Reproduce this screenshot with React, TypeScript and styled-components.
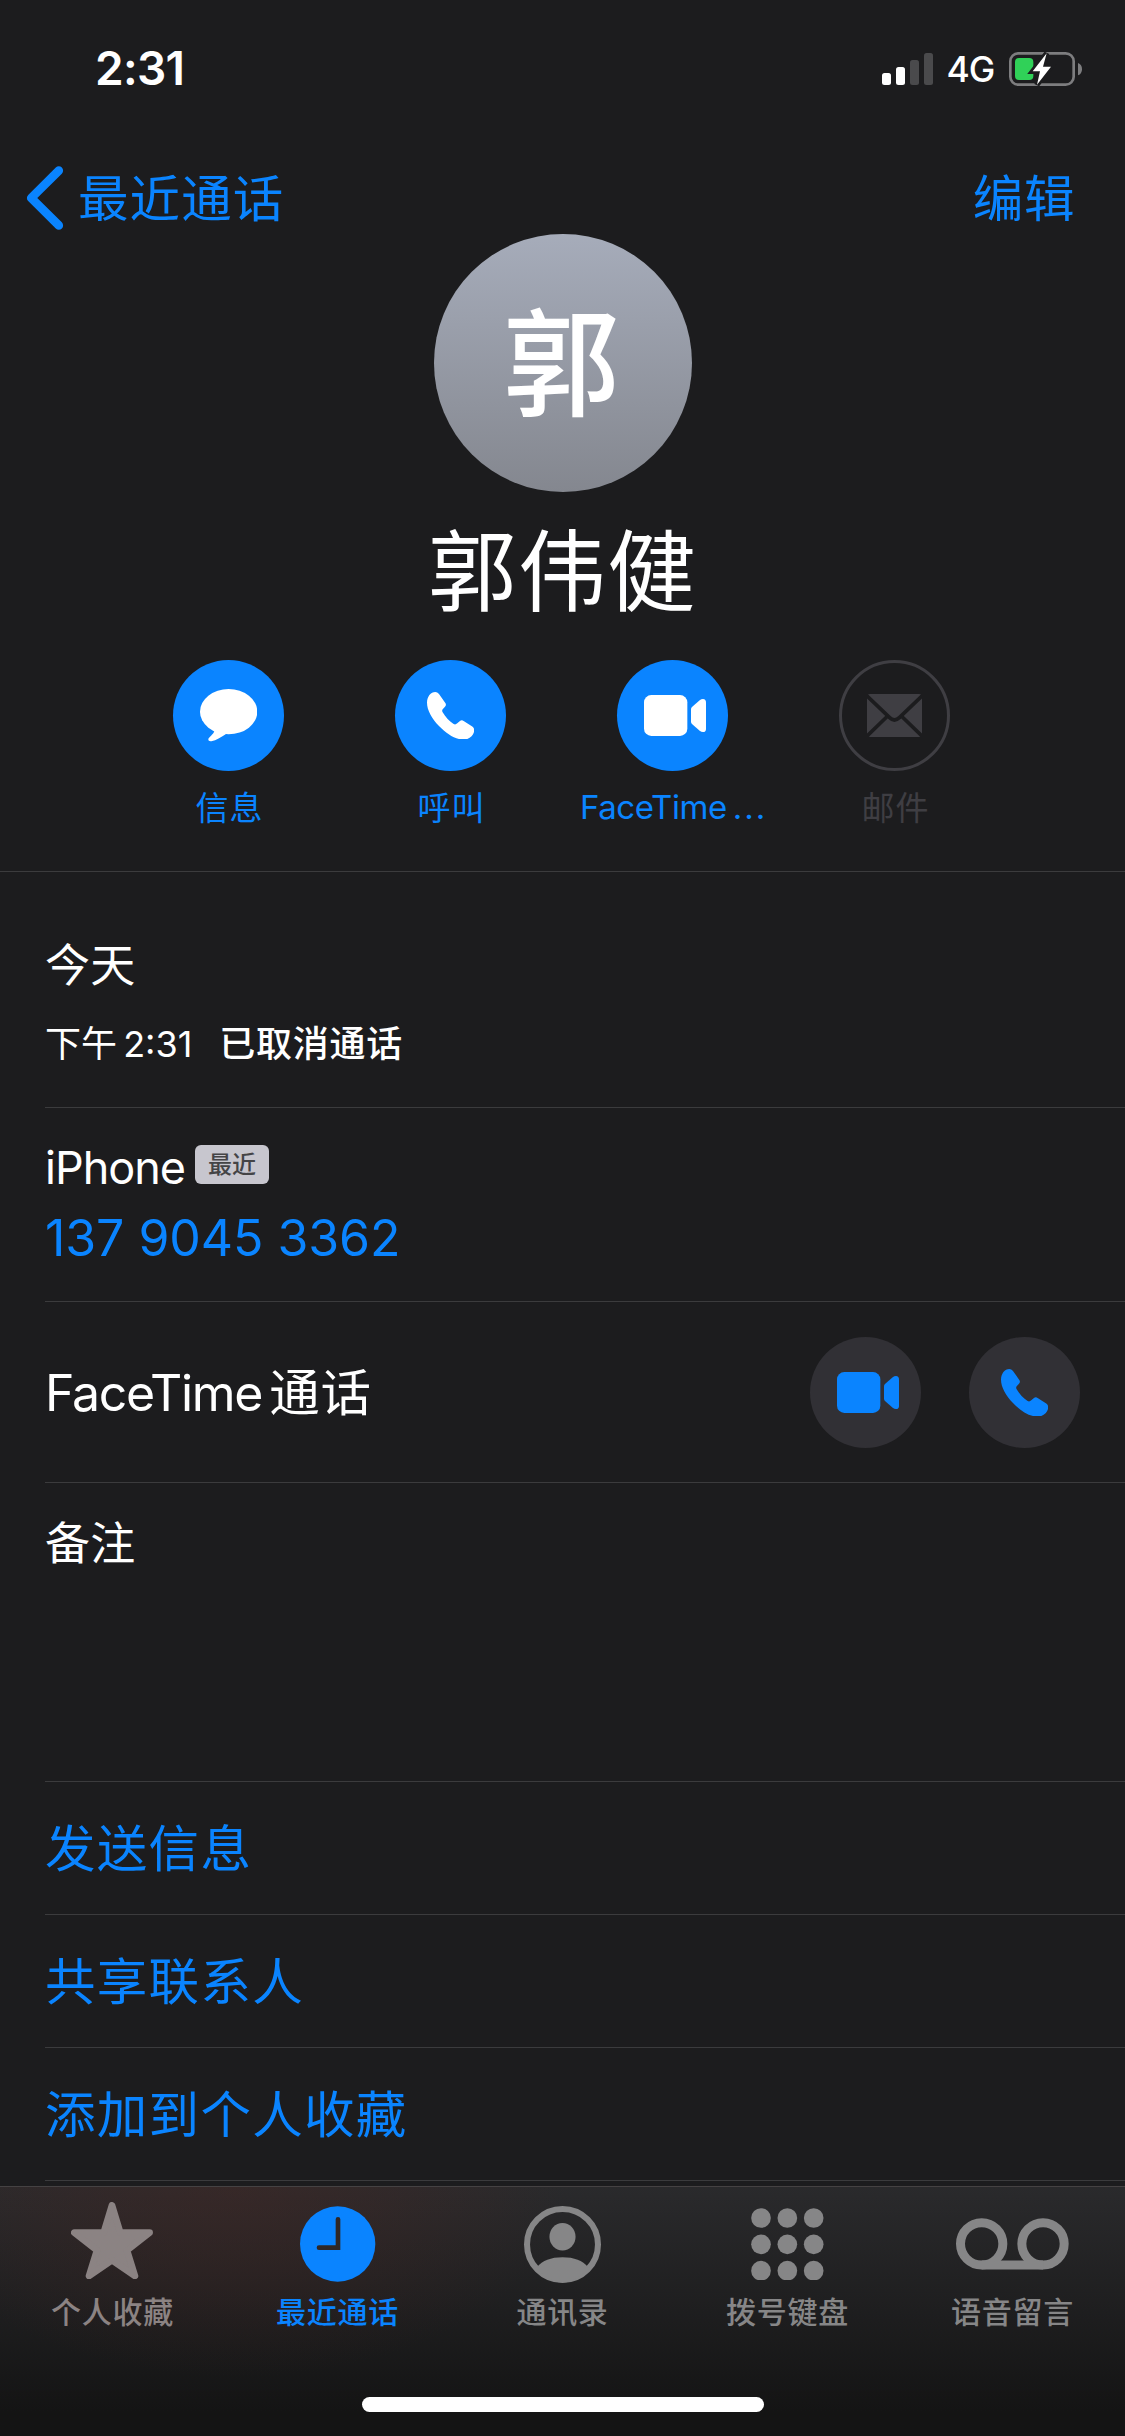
import React from 'react';
import styled, { createGlobalStyle, css } from 'styled-components';

const BLUE = '#0a84ff';
const BG = '#1c1c1e';
const LINE = '#3b3b3d';
const DISABLED = '#3f3e43';

const GlobalStyle = createGlobalStyle`
  * { box-sizing: border-box; }
  body {
    margin: 0;
    background: ${BG};
    color: #fff;
    font-family: Inter, "Noto Sans CJK SC", sans-serif;
  }
`;

const Screen = styled.div`
  width: 1125px;
  height: 2436px;
  display: flex;
  flex-direction: column;
  overflow: hidden;
  background: ${BG};
`;

const Text = styled.span<{ $size: number; $track?: number; $weight?: number; $color?: string }>`
  font-size: ${p => p.$size}px;
  line-height: 1.2;
  letter-spacing: ${p => p.$track ?? 0}px;
  font-weight: ${p => p.$weight ?? 400};
  color: ${p => p.$color ?? 'inherit'};
  white-space: nowrap;
`;

const StatusBar = styled.header`
  height: 132px;
  flex: none;
  display: flex;
  justify-content: space-between;
  align-items: flex-start;
  padding: 41px 43px 0 95px;
`;

const StatusIcons = styled.div`
  display: flex;
  align-items: center;
  height: 56px;
`;

const NetworkLabel = styled(Text)`
  margin: 2px 15px 0 14px;
`;

const NavBar = styled.nav`
  height: 132px;
  flex: none;
  display: flex;
  justify-content: space-between;
  align-items: center;
  padding: 0 50px 0 26px;
  color: ${BLUE};
`;

const NavText = styled(Text)`
  padding-top: 2px;
`;

const BackButton = styled.div`
  display: flex;
  align-items: center;
  gap: 14px;
`;

const Profile = styled.section`
  height: 608px;
  flex: none;
  display: flex;
  flex-direction: column;
  align-items: center;
  border-bottom: 1px solid ${LINE};
`;

const Avatar = styled.div`
  width: 258px;
  height: 258px;
  margin-top: -30px;
  padding-top: 5px;
  padding-right: 2px;
  flex: none;
  border-radius: 50%;
  display: flex;
  align-items: center;
  justify-content: center;
  background: linear-gradient(#a6acba, #84878f);
`;

const Name = styled(Text)`
  margin-top: 27px;
  height: 104px;
`;

const Actions = styled.div`
  display: grid;
  grid-template-columns: repeat(4, 222px);
  margin-top: 37px;
  margin-right: 2px;
`;

const Action = styled.div<{ $disabled?: boolean }>`
  display: flex;
  flex-direction: column;
  align-items: center;
  gap: 17px;
  color: ${p => (p.$disabled ? DISABLED : BLUE)};
`;

const ActionLabel = styled(Text)<{ $latin?: boolean }>`
  padding-top: ${p => (p.$latin ? 0 : 1)}px;
  padding-left: 2px;
`;

const Circle = styled.div<{ $variant: 'solid' | 'outline' | 'muted' }>`
  width: 111px;
  height: 111px;
  border-radius: 50%;
  display: flex;
  align-items: center;
  justify-content: center;
  ${p => p.$variant === 'solid' && css`background: ${BLUE}; color: #fff;`}
  ${p => p.$variant === 'outline' && css`border: 3px solid ${DISABLED}; color: ${DISABLED};`}
  ${p => p.$variant === 'muted' && css`background: #313035; color: ${BLUE};`}
`;

const Dots = styled.span`
  letter-spacing: 1.9px;
  margin-left: 6px;
`;

const Row = styled.section<{ $height: number; $justify?: string }>`
  height: ${p => p.$height}px;
  flex: none;
  margin-left: 45px;
  display: flex;
  flex-direction: column;
  justify-content: ${p => p.$justify ?? 'flex-start'};
  border-bottom: 1px solid ${LINE};
`;

const LinkText = styled(Text)`
  padding-top: 3px;
`;

const Day = styled(Text)`
  margin-top: 67px;
`;

const CallLine = styled.div`
  display: flex;
  align-items: center;
  margin-top: 30px;
  gap: 27px;
`;

const CallTime = styled(Text)`
  word-spacing: -4px;
`;

const PhoneLabel = styled.div`
  display: flex;
  align-items: center;
  gap: 10px;
  height: 54px;
  margin-top: 33px;
`;

const Badge = styled.span`
  height: 39px;
  width: 74px;
  margin-bottom: 7px;
  padding-top: 1px;
  border-radius: 6px;
  background: #c7c6ce;
  color: #444446;
  display: flex;
  align-items: center;
  justify-content: center;
`;

const PhoneNumber = styled(Text)`
  margin-top: 13px;
`;

const FaceTimeRow = styled(Row)`
  flex-direction: row;
  align-items: center;
  justify-content: space-between;
  padding-right: 45px;
`;

const FaceTimeTitle = styled.div`
  display: flex;
  align-items: center;
  gap: 7px;
  padding-top: 2px;
`;

const RoundButtons = styled.div`
  display: flex;
  gap: 48px;
  margin-top: 1px;
`;

const Notes = styled(Text)`
  margin-top: 34px;
`;

const TabBar = styled.footer`
  height: 250px;
  flex: none;
  margin-top: 5px;
  border-top: 1px solid #454243;
  display: flex;
  flex-direction: column;
  align-items: center;
  background:
    radial-gradient(ellipse 330px 190px at 235px 0px, rgba(74, 38, 34, 0.4), rgba(74, 38, 34, 0.25) 45%, rgba(74, 38, 34, 0)),
    linear-gradient(#2a2a2c, #1e1e1f 50%, #141414 90%);
`;

const Tabs = styled.div`
  width: 100%;
  height: 210px;
  display: grid;
  grid-template-columns: repeat(5, 1fr);
`;

const Tab = styled.div<{ $active?: boolean; $tint?: string }>`
  display: flex;
  flex-direction: column;
  align-items: center;
  color: ${p => (p.$active ? BLUE : p.$tint ?? '#868687')};
`;

const TabIcon = styled.div<{ $lift?: number }>`
  height: 114px;
  padding-bottom: ${p => p.$lift ?? 0}px;
  display: flex;
  align-items: center;
`;

const TabLabel = styled(Text)`
  margin-top: -7px;
`;

const HomeIndicator = styled.div`
  width: 402px;
  height: 15px;
  border-radius: 8px;
  background: #fff;
`;

const Signal = () => (
  <svg width="51" height="32" viewBox="0 0 51 32">
    <rect x="0" y="20" width="9" height="12" rx="2.5" fill="#fff" />
    <rect x="14" y="14" width="9" height="18" rx="2.5" fill="#fff" />
    <rect x="28" y="7" width="9" height="25" rx="2.5" fill="#4a4a4c" />
    <rect x="42" y="0" width="9" height="32" rx="2.5" fill="#4a4a4c" />
  </svg>
);

const Battery = () => (
  <svg width="73" height="34" viewBox="0 0 219 102">
    <rect x="4" y="4" width="190" height="94" rx="24" fill="none" stroke="#7d7d7f" strokeWidth="8" />
    <path d="M207 33Q219 37 219 52Q219 66 207 70Z" fill="#7d7d7f" />
    <rect x="18" y="18" width="55" height="66" rx="12" fill="#30d158" />
    <path d="M113 4L71 58H93L84 98L126 44H102Z" fill={BG} stroke={BG} strokeWidth="16" />
    <path d="M113 4L71 58H93L84 98L126 44H102Z" fill="#fff" />
  </svg>
);

const Chevron = () => (
  <svg width="38" height="64" viewBox="0 0 38 64" fill="none" stroke={BLUE} strokeWidth="8.6" strokeLinecap="round" strokeLinejoin="round">
    <path d="M32.8 4.6L5.2 32L32.8 59.4" />
  </svg>
);

const Bubble = () => (
  <svg width="57.3" height="52.3" viewBox="0 0 172 157" fill="currentColor">
    <ellipse cx="86" cy="68" rx="86" ry="68" />
    <path d="M43 126C41 136 25 145 25 151C25 156 29 157 34 156.5C50 154 62 146 77 136L90 120Z" />
  </svg>
);

const Handset = () => (
  <svg width="47.3" height="47.6" viewBox="0 0 142 143" fill="currentColor">
    <path d="M0 32C0 14 11 0 25 0Q31 0 36 6L55 33Q59 39 54 44L47 52Q44 56 47 61C55 75 66 87 80 96Q85 99 90 95L98 88Q104 83 110 87L136 104Q142 108 142 115C141 131 127 143 110 143C86 143 59 126 36 102C14 79 0 54 0 32Z" />
  </svg>
);

const VideoIcon = styled.svg`
  margin-left: 5px;
`;

const Video = () => (
  <VideoIcon width="62" height="41" viewBox="0 0 186 123" fill="currentColor">
    <rect width="130" height="123" rx="22" />
    <path d="M141 43Q141 39 144 36L167 16Q172 12 177 12Q186 13 186 22V101Q186 111 177 111Q172 111 167 107L144 87Q141 84 141 80Z" />
  </VideoIcon>
);

const Mail = () => (
  <svg width="55" height="43" viewBox="0 0 165 129">
    <rect width="165" height="129" rx="9" fill="currentColor" />
    <g fill="none" stroke={BG} strokeWidth="11">
      <path d="M-4 2L68 71Q82 85 97 71L169 2" />
      <path d="M-4 130L62 66M169 130L103 66" />
    </g>
  </svg>
);

const Star = () => (
  <svg width="82.3" height="77.3" viewBox="213 95 247 232" fill="currentColor" stroke="currentColor" strokeWidth="20" strokeLinejoin="round">
    <path d="M336 105L361 187H449L381 240L405 317L336 270L267 317L291 240L223 187H311Z" />
  </svg>
);

const Clock = () => (
  <svg width="76" height="76" viewBox="0 0 228 228">
    <circle cx="113" cy="114" r="113" fill={BLUE} />
    <path d="M114 40V125H57" fill="none" stroke="#2f2726" strokeWidth="14" strokeLinecap="round" />
  </svg>
);

const Contact = () => (
  <svg width="77" height="77" viewBox="0 0 230 230" fill="currentColor">
    <circle cx="115" cy="115" r="106" fill="none" stroke="currentColor" strokeWidth="18" />
    <ellipse cx="115" cy="92" rx="39" ry="41" />
    <path d="M39 182C55 163 80 153 115 153C150 153 175 163 191 182C172 212 145 228 115 228C85 228 58 212 39 182Z" />
  </svg>
);

const Keypad = () => (
  <svg width="72.7" height="72.7" viewBox="0 0 218 218" fill="currentColor">
    {[30, 109, 188].map(y => [30, 109, 188].map(x => <circle key={`${x}-${y}`} cx={x} cy={y} r="29.5" />))}
  </svg>
);

const Voicemail = () => (
  <svg width="112.7" height="51.7" viewBox="0 0 338 155" fill="none" stroke="currentColor" strokeWidth="27">
    <circle cx="77" cy="77.5" r="63.5" />
    <circle cx="261" cy="77.5" r="63.5" />
    <path d="M77 141H261" />
  </svg>
);

const actions = [
  { label: '信息', icon: <Bubble /> },
  { label: '呼叫', icon: <Handset /> },
  { label: 'FaceTime', icon: <Video />, truncated: true },
  { label: '邮件', icon: <Mail />, disabled: true },
];

const links = ['发送信息', '共享联系人', '添加到个人收藏'];

const tabs = [
  { label: '个人收藏', icon: <Star />, tint: '#8b8383', lift: 7 },
  { label: '最近通话', icon: <Clock />, active: true },
  { label: '通讯录', icon: <Contact /> },
  { label: '拨号键盘', icon: <Keypad /> },
  { label: '语音留言', icon: <Voicemail /> },
];

export default function App() {
  return (
    <>
      <GlobalStyle />
      <Screen>
        <StatusBar>
          <Text $size={46} $weight={600} $track={-0.7}>2:31</Text>
          <StatusIcons>
            <Signal />
            <NetworkLabel $size={35.5} $weight={500} $track={-1.2}>4G</NetworkLabel>
            <Battery />
          </StatusIcons>
        </StatusBar>
        <NavBar>
          <BackButton>
            <Chevron />
            <NavText $size={50.5} $track={1.1}>最近通话</NavText>
          </BackButton>
          <NavText $size={50.5} $track={0.6}>编辑</NavText>
        </NavBar>
        <Profile>
          <Avatar>
            <Text $size={117} $weight={500}>郭</Text>
          </Avatar>
          <Name $size={88.5} $track={1.2}>郭伟健</Name>
          <Actions>
            {actions.map(a => (
              <Action key={a.label} $disabled={a.disabled}>
                <Circle $variant={a.disabled ? 'outline' : 'solid'}>{a.icon}</Circle>
                <ActionLabel $size={33} $track={a.truncated ? -0.4 : 1} $latin={a.truncated}>
                  {a.label}
                  {a.truncated && <Dots>...</Dots>}
                </ActionLabel>
              </Action>
            ))}
          </Actions>
        </Profile>
        <Row $height={236}>
          <Day $size={45} $track={0.2}>今天</Day>
          <CallLine>
            <CallTime $size={36}>下午 2:31</CallTime>
            <Text $size={36} $weight={500} $track={0.7}>已取消通话</Text>
          </CallLine>
        </Row>
        <Row $height={194}>
          <PhoneLabel>
            <Text $size={45} $track={-1}>iPhone</Text>
            <Badge><Text $size={24} $weight={500}>最近</Text></Badge>
          </PhoneLabel>
          <PhoneNumber $size={50} $track={-0.05} $color={BLUE}>137 9045 3362</PhoneNumber>
        </Row>
        <FaceTimeRow $height={181}>
          <FaceTimeTitle>
            <Text $size={50} $track={-1.3}>FaceTime</Text>
            <Text $size={50.5} $track={1}>通话</Text>
          </FaceTimeTitle>
          <RoundButtons>
            <Circle $variant="muted"><Video /></Circle>
            <Circle $variant="muted"><Handset /></Circle>
          </RoundButtons>
        </FaceTimeRow>
        <Row $height={299}>
          <Notes $size={45} $track={0.2}>备注</Notes>
        </Row>
        {links.map(link => (
          <Row key={link} $height={133} $justify="center">
            <LinkText $size={50.5} $track={1.3} $color={BLUE}>{link}</LinkText>
          </Row>
        ))}
        <TabBar>
          <Tabs>
            {tabs.map(t => (
              <Tab key={t.label} $active={t.active} $tint={t.tint}>
                <TabIcon $lift={t.lift}>{t.icon}</TabIcon>
                <TabLabel $size={30} $weight={500} $track={0.7}>{t.label}</TabLabel>
              </Tab>
            ))}
          </Tabs>
          <HomeIndicator />
        </TabBar>
      </Screen>
    </>
  );
}
